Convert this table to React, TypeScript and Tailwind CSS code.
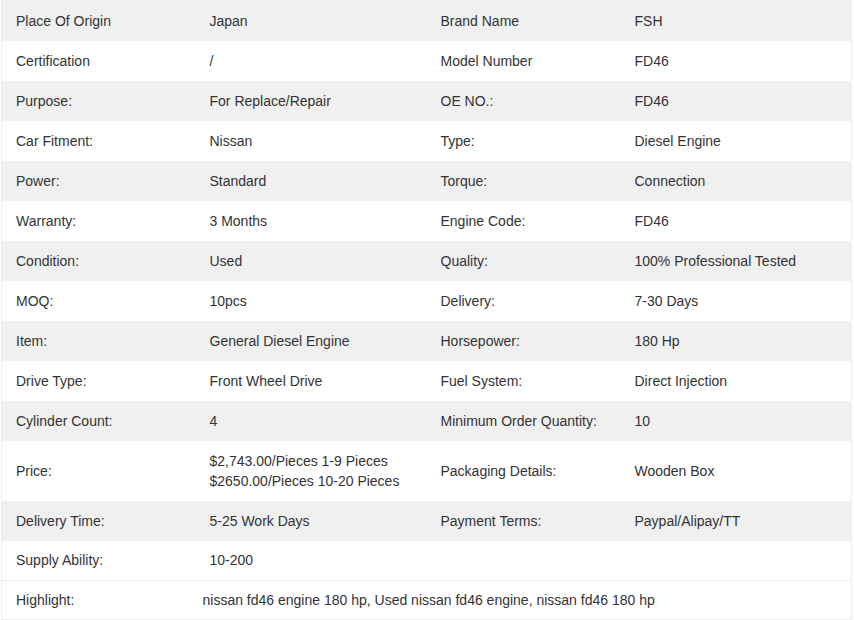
import React from "react";

type Row = [string, React.ReactNode, string, React.ReactNode];

const rows: Row[] = [
    ["Place Of Origin", "Japan", "Brand Name", "FSH"],
    ["Certification", "/", "Model Number", "FD46"],
    ["Purpose:", "For Replace/Repair", "OE NO.:", "FD46"],
    ["Car Fitment:", "Nissan", "Type:", "Diesel Engine"],
    ["Power:", "Standard", "Torque:", "Connection"],
    ["Warranty:", "3 Months", "Engine Code:", "FD46"],
    ["Condition:", "Used", "Quality:", "100% Professional Tested"],
    ["MOQ:", "10pcs", "Delivery:", "7-30 Days"],
    ["Item:", "General Diesel Engine", "Horsepower:", "180 Hp"],
    ["Drive Type:", "Front Wheel Drive", "Fuel System:", "Direct Injection"],
    ["Cylinder Count:", "4", "Minimum Order Quantity:", "10"],
    [
        "Price:",
        <>
            $2,743.00/Pieces 1-9 Pieces
            <br />
            $2650.00/Pieces 10-20 Pieces
        </>,
        "Packaging Details:",
        "Wooden Box",
    ],
    ["Delivery Time:", "5-25 Work Days", "Payment Terms:", "Paypal/Alipay/TT"],
    ["Supply Ability:", "10-200", "", ""],
];

export default function App() {
    return (
        <div className="w-[854px] bg-white font-['Liberation_Sans',Arial,sans-serif] text-[14px] text-[#333]">
            <table className="ml-px w-[851px] table-fixed border-collapse border border-[#eee]">
                <colgroup>
                    <col className="w-[194px]" />
                    <col className="w-[231px]" />
                    <col className="w-[194px]" />
                    <col />
                </colgroup>
                <tbody>
                    {rows.map((r, i) => (
                        <tr
                            key={i}
                            className={
                                i % 2 === 0 && i !== 13
                                    ? "bg-[#f0f0f0]"
                                    : "bg-white"
                            }
                        >
                            <td
                                className={
                                    i === 11
                                        ? "h-[60px] px-[14px] leading-5"
                                        : "h-10 px-[14px] leading-5"
                                }
                            >
                                {r[0]}
                            </td>
                            <td className="px-[14px] leading-5">{r[1]}</td>
                            <td className="px-[14px] leading-5">{r[2]}</td>
                            <td className="px-[14px] leading-5">{r[3]}</td>
                        </tr>
                    ))}
                    <tr className="border-t border-[#eee] bg-white">
                        <td className="h-[39px] px-[14px] leading-5">
                            Highlight:
                        </td>
                        <td colSpan={3} className="px-[7px] leading-5">
                            nissan fd46 engine 180 hp, Used nissan fd46 engine,
                            nissan fd46 180 hp
                        </td>
                    </tr>
                </tbody>
            </table>
        </div>
    );
}
